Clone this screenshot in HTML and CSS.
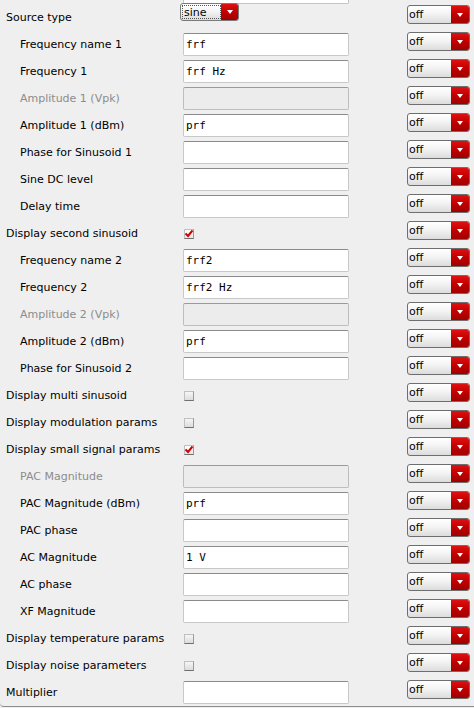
FILE: index.html
```html
<!DOCTYPE html>
<html>
<head>
<meta charset="utf-8">
<link rel="stylesheet" href="styles.css">
</head>
<body>
<div class="panel">
  <div class="stub"><div class="stub-field"></div></div>

  <div class="row"><span class="label">Source type</span>
    <div class="cell"><div class="dd dd-sine"><span class="dd-text"><span class="focus">sine</span></span><span class="dd-btn"><span class="tri"></span></span></div></div>
    <div class="opt"><div class="dd"><span class="dd-text">off</span><span class="dd-btn"><span class="tri"></span></span></div></div></div>

  <div class="row"><span class="label ind">Frequency name 1</span><div class="cell"><div class="field">frf</div></div><div class="opt"><div class="dd"><span class="dd-text">off</span><span class="dd-btn"><span class="tri"></span></span></div></div></div>
  <div class="row"><span class="label ind">Frequency 1</span><div class="cell"><div class="field">frf Hz</div></div><div class="opt"><div class="dd"><span class="dd-text">off</span><span class="dd-btn"><span class="tri"></span></span></div></div></div>
  <div class="row"><span class="label ind dis">Amplitude 1 (Vpk)</span><div class="cell"><div class="field disabled"></div></div><div class="opt"><div class="dd"><span class="dd-text">off</span><span class="dd-btn"><span class="tri"></span></span></div></div></div>
  <div class="row"><span class="label ind">Amplitude 1 (dBm)</span><div class="cell"><div class="field">prf</div></div><div class="opt"><div class="dd"><span class="dd-text">off</span><span class="dd-btn"><span class="tri"></span></span></div></div></div>
  <div class="row"><span class="label ind">Phase for Sinusoid 1</span><div class="cell"><div class="field"></div></div><div class="opt"><div class="dd"><span class="dd-text">off</span><span class="dd-btn"><span class="tri"></span></span></div></div></div>
  <div class="row"><span class="label ind">Sine DC level</span><div class="cell"><div class="field"></div></div><div class="opt"><div class="dd"><span class="dd-text">off</span><span class="dd-btn"><span class="tri"></span></span></div></div></div>
  <div class="row"><span class="label ind">Delay time</span><div class="cell"><div class="field"></div></div><div class="opt"><div class="dd"><span class="dd-text">off</span><span class="dd-btn"><span class="tri"></span></span></div></div></div>
  <div class="row"><span class="label">Display second sinusoid</span><div class="cell"><span class="cb checked"><svg viewBox="0 0 10 9" width="10" height="9"><path d="M1.5 4.5 L4 7 L8.5 1.5" fill="none" stroke="#d40000" stroke-width="2"/></svg></span></div><div class="opt"><div class="dd"><span class="dd-text">off</span><span class="dd-btn"><span class="tri"></span></span></div></div></div>

  <div class="row"><span class="label ind">Frequency name 2</span><div class="cell"><div class="field">frf2</div></div><div class="opt"><div class="dd"><span class="dd-text">off</span><span class="dd-btn"><span class="tri"></span></span></div></div></div>
  <div class="row"><span class="label ind">Frequency 2</span><div class="cell"><div class="field">frf2 Hz</div></div><div class="opt"><div class="dd"><span class="dd-text">off</span><span class="dd-btn"><span class="tri"></span></span></div></div></div>
  <div class="row"><span class="label ind dis">Amplitude 2 (Vpk)</span><div class="cell"><div class="field disabled"></div></div><div class="opt"><div class="dd"><span class="dd-text">off</span><span class="dd-btn"><span class="tri"></span></span></div></div></div>
  <div class="row"><span class="label ind">Amplitude 2 (dBm)</span><div class="cell"><div class="field">prf</div></div><div class="opt"><div class="dd"><span class="dd-text">off</span><span class="dd-btn"><span class="tri"></span></span></div></div></div>
  <div class="row"><span class="label ind">Phase for Sinusoid 2</span><div class="cell"><div class="field"></div></div><div class="opt"><div class="dd"><span class="dd-text">off</span><span class="dd-btn"><span class="tri"></span></span></div></div></div>

  <div class="row"><span class="label">Display multi sinusoid</span><div class="cell"><span class="cb"></span></div><div class="opt"><div class="dd"><span class="dd-text">off</span><span class="dd-btn"><span class="tri"></span></span></div></div></div>
  <div class="row"><span class="label">Display modulation params</span><div class="cell"><span class="cb"></span></div><div class="opt"><div class="dd"><span class="dd-text">off</span><span class="dd-btn"><span class="tri"></span></span></div></div></div>
  <div class="row"><span class="label">Display small signal params</span><div class="cell"><span class="cb checked"><svg viewBox="0 0 10 9" width="10" height="9"><path d="M1.5 4.5 L4 7 L8.5 1.5" fill="none" stroke="#d40000" stroke-width="2"/></svg></span></div><div class="opt"><div class="dd"><span class="dd-text">off</span><span class="dd-btn"><span class="tri"></span></span></div></div></div>

  <div class="row"><span class="label ind dis">PAC Magnitude</span><div class="cell"><div class="field disabled"></div></div><div class="opt"><div class="dd"><span class="dd-text">off</span><span class="dd-btn"><span class="tri"></span></span></div></div></div>
  <div class="row"><span class="label ind">PAC Magnitude (dBm)</span><div class="cell"><div class="field">prf</div></div><div class="opt"><div class="dd"><span class="dd-text">off</span><span class="dd-btn"><span class="tri"></span></span></div></div></div>
  <div class="row"><span class="label ind">PAC phase</span><div class="cell"><div class="field"></div></div><div class="opt"><div class="dd"><span class="dd-text">off</span><span class="dd-btn"><span class="tri"></span></span></div></div></div>
  <div class="row"><span class="label ind">AC Magnitude</span><div class="cell"><div class="field">1 V</div></div><div class="opt"><div class="dd"><span class="dd-text">off</span><span class="dd-btn"><span class="tri"></span></span></div></div></div>
  <div class="row"><span class="label ind">AC phase</span><div class="cell"><div class="field"></div></div><div class="opt"><div class="dd"><span class="dd-text">off</span><span class="dd-btn"><span class="tri"></span></span></div></div></div>
  <div class="row"><span class="label ind">XF Magnitude</span><div class="cell"><div class="field"></div></div><div class="opt"><div class="dd"><span class="dd-text">off</span><span class="dd-btn"><span class="tri"></span></span></div></div></div>

  <div class="row"><span class="label">Display temperature params</span><div class="cell"><span class="cb"></span></div><div class="opt"><div class="dd"><span class="dd-text">off</span><span class="dd-btn"><span class="tri"></span></span></div></div></div>
  <div class="row"><span class="label">Display noise parameters</span><div class="cell"><span class="cb"></span></div><div class="opt"><div class="dd"><span class="dd-text">off</span><span class="dd-btn"><span class="tri"></span></span></div></div></div>
  <div class="row"><span class="label">Multiplier</span><div class="cell"><div class="field"></div></div><div class="opt"><div class="dd"><span class="dd-text">off</span><span class="dd-btn"><span class="tri"></span></span></div></div></div>
</div>
</body>
</html>
```

FILE: styles.css
```css
html, body {
  margin: 0;
  padding: 0;
  background: #efefef;
}

.panel {
  width: 474px;
  box-sizing: border-box;
  background: #efefef;
  border-bottom: 1px solid #8c8c8c;
  border-bottom-left-radius: 4px;
  font-family: "DejaVu Sans", sans-serif;
  font-size: 11px;
  color: #000;
}

.stub {
  height: 4px;
  padding-left: 183px;
}

.stub-field {
  width: 166px;
  height: 4px;
  box-sizing: border-box;
  background: #fff;
  border: 1px solid #c4c4c4;
  border-top: none;
  border-radius: 0 0 2px 2px;
}

.row {
  display: grid;
  grid-template-columns: 183px 166px 58px 63px;
  height: 27px;
  align-items: center;
}

.label {
  grid-column: 1;
  padding-left: 6px;
  white-space: nowrap;
  line-height: 13px;
}

.label.ind {
  padding-left: 20px;
}

.label.dis {
  color: #8c8c8c;
}

.cell {
  grid-column: 2;
  display: flex;
  align-items: center;
}

.field {
  width: 166px;
  height: 23px;
  box-sizing: border-box;
  background: #fff;
  border: 1px solid #c8c8c8;
  border-top-color: #8a8a8a;
  border-radius: 2px;
  padding-left: 2px;
  font-family: "DejaVu Sans Mono", monospace;
  font-size: 11px;
  line-height: 21px;
  white-space: pre;
}

.field.disabled {
  background: #ececec;
  border-color: #bdbdbd;
  border-top-color: #9a9a9a;
}

.cb {
  display: block;
  width: 10px;
  height: 10px;
  box-sizing: border-box;
  margin-left: 1px;
  background: linear-gradient(#f6f6f6, #dcdcdc);
  border: 1px solid #c0c0c0;
  border-bottom-color: #707070;
  border-right-color: #9a9a9a;
}

.cb.checked {
  background: linear-gradient(#ffffff, #e6e6e6);
  position: relative;
}

.cb svg {
  position: absolute;
  left: -1px;
  top: -1px;
}

.opt {
  grid-column: 4;
  display: flex;
  align-self: start;
  margin-top: 1px;
}

.dd {
  display: flex;
  width: 63px;
  height: 19px;
  box-sizing: border-box;
  border: 1px solid #6e6e6e;
  border-radius: 3px;
  overflow: hidden;
  background: linear-gradient(#ffffff 0%, #f4f4f4 45%, #dcdcdc 100%);
}

.dd-text {
  flex: 1;
  padding-left: 1px;
  font-family: "DejaVu Sans", sans-serif;
  font-size: 11px;
  line-height: 17px;
  color: #000;
}

.dd-btn {
  width: 18px;
  display: flex;
  align-items: center;
  justify-content: center;
  background: linear-gradient(#e01010 0%, #c00000 50%, #a00000 100%);
}

.tri {
  width: 0;
  height: 0;
  border-left: 3px solid transparent;
  border-right: 3px solid transparent;
  border-top: 4px solid #fff;
}

.dd-sine {
  width: 59px;
  height: 18px;
  margin-left: -3px;
  margin-top: -11px;
  border-color: #7a7a7a;
}

.dd-sine .dd-text {
  padding: 1px 0 1px 1px;
  line-height: 14px;
  display: flex;
}

.focus {
  flex: 1;
  border: 1px dotted #555;
  padding-left: 1px;
  line-height: 13px;
}

.dd-sine .dd-btn {
  width: 17px;
}
```
